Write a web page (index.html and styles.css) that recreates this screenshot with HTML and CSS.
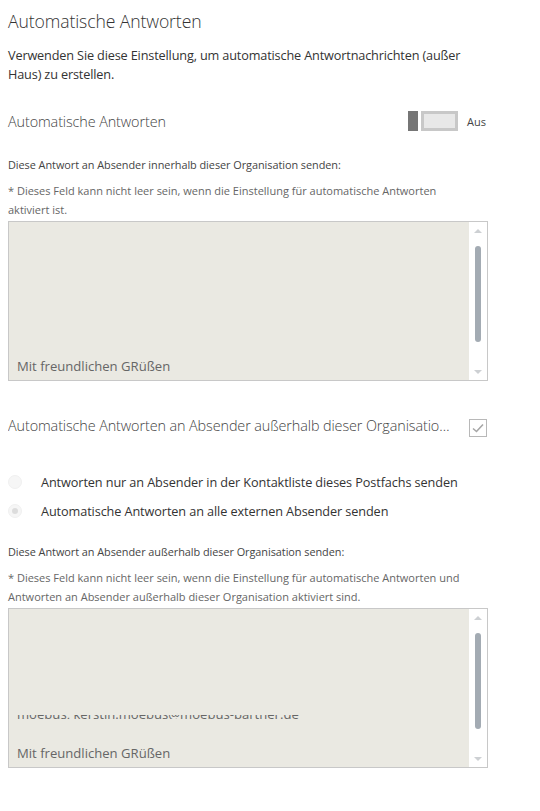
FILE: index.html
```html
<!DOCTYPE html>
<html lang="de">
<head>
<meta charset="utf-8">
<link rel="stylesheet" href="styles.css">
</head>
<body>
<div class="page">
  <h1 class="title">Automatische Antworten</h1>
  <p class="desc">Verwenden Sie diese Einstellung, um automatische Antwortnachrichten (außer Haus) zu erstellen.</p>

  <div class="row toggle-row">
    <span class="label">Automatische Antworten</span>
    <div class="toggle-wrap">
      <span class="toggle"><span class="knob"></span><span class="track"></span></span>
      <span class="toggle-text">Aus</span>
    </div>
  </div>

  <p class="small first-small">Diese Antwort an Absender innerhalb dieser Organisation senden:</p>
  <p class="note">* Dieses Feld kann nicht leer sein, wenn die Einstellung für automatische Antworten aktiviert ist.</p>

  <div class="editor">
    <div class="editor-body">
      <div class="editor-text">Mit freundlichen GRüßen</div>
    </div>
    <div class="scrollbar">
      <span class="arrow up"></span>
      <span class="thumb"></span>
      <span class="arrow down"></span>
    </div>
  </div>

  <div class="row check-row">
    <span class="label ellipsis">Automatische Antworten an Absender außerhalb dieser Organisation senden</span>
    <span class="checkbox">
      <svg width="14" height="12" viewBox="0 0 14 12"><path d="M2 6.5 L5.5 9.5 L12 2.5" fill="none" stroke="#a6a6a6" stroke-width="1.6"/></svg>
    </span>
  </div>

  <div class="radios">
    <div class="radio-row"><span class="radio"></span><span class="radio-text">Antworten nur an Absender in der Kontaktliste dieses Postfachs senden</span></div>
    <div class="radio-row"><span class="radio checked"></span><span class="radio-text">Automatische Antworten an alle externen Absender senden</span></div>
  </div>

  <p class="small second-small">Diese Antwort an Absender außerhalb dieser Organisation senden:</p>
  <p class="note">* Dieses Feld kann nicht leer sein, wenn die Einstellung für automatische Antworten und Antworten an Absender außerhalb dieser Organisation aktiviert sind.</p>

  <div class="editor">
    <div class="editor-body">
      <div class="cut-line"><span>moebus, kerstin.moebus@moebus-partner.de</span></div>
      <div class="editor-text">Mit freundlichen GRüßen</div>
    </div>
    <div class="scrollbar">
      <span class="arrow up"></span>
      <span class="thumb"></span>
      <span class="arrow down"></span>
    </div>
  </div>
</div>
</body>
</html>
```
FILE: styles.css
```css
* { box-sizing: border-box; }
html, body { margin: 0; padding: 0; background: #fff; }
body {
  font-family: "Open Sans", "Noto Sans", "Liberation Sans", sans-serif;
  color: #333;
}
.page {
  width: 540px;
  padding: 0 0 0 8px;
}
.title {
  margin: 0;
  padding-top: 8px;
  font-size: 17.6px;
  font-weight: 300;
  line-height: 26px;
  color: #333;
  letter-spacing: -0.1px;
}
.desc {
  margin: 12px 0 0;
  width: 470px;
  font-size: 12.7px;
  line-height: 19px;
  color: #333;
  letter-spacing: -0.15px;
}
.row {
  display: flex;
  align-items: center;
  width: 480px;
}
.toggle-row {
  margin-top: 26px;
  height: 22px;
  justify-content: space-between;
}
.label {
  font-size: 14.4px;
  font-weight: 300;
  color: #444;
  letter-spacing: -0.1px;
}
.toggle-wrap {
  display: flex;
  align-items: center;
  gap: 9px;
  width: 80px;
}
.toggle {
  display: flex;
  gap: 3px;
  height: 20px;
}
.knob {
  width: 10px;
  height: 20px;
  background: #767676;
}
.track {
  width: 37px;
  height: 20px;
  border: 3px solid #c8c8c8;
  background: #e8e8e8;
}
.toggle-text {
  font-size: 11px;
  color: #444;
}
.small {
  margin: 0;
  font-size: 10.9px;
  line-height: 19px;
  color: #444;
  letter-spacing: -0.05px;
}
.first-small { margin-top: 23px; }
.second-small { margin-top: 21px; }
.note {
  margin: 7px 0 0;
  width: 465px;
  font-size: 11px;
  line-height: 19px;
  color: #666;
  letter-spacing: 0;
}
.editor {
  margin-top: 2px;
  width: 480px;
  height: 160px;
  border: 1px solid #c8c8c8;
  display: flex;
}
.editor-body {
  flex: 1;
  background: #eae9e2;
  display: flex;
  flex-direction: column;
  justify-content: flex-end;
  padding: 0 0 5px 8px;
}
.editor-text {
  font-size: 13.1px;
  line-height: 18px;
  color: #666;
}
.cut-line {
  height: 4px;
  overflow: hidden;
  margin-bottom: 25px;
}
.cut-line span {
  display: block;
  margin-top: -10px;
  font-size: 13.1px;
  line-height: 18px;
  color: #666;
  white-space: nowrap;
}
.scrollbar {
  width: 18px;
  background: #fff;
  display: flex;
  flex-direction: column;
  align-items: center;
}
.arrow {
  width: 0; height: 0;
  border-left: 4px solid transparent;
  border-right: 4px solid transparent;
}
.arrow.up {
  margin-top: 7px;
  border-bottom: 4px solid #cdd0d3;
}
.arrow.down {
  margin-top: auto;
  margin-bottom: 6px;
  border-top: 4px solid #cdd0d3;
}
.thumb {
  width: 6px;
  background: #a3abb3;
  border-radius: 3px;
  margin-top: 13px;
  height: 96px;
}
.check-row {
  margin-top: 33px;
  height: 22px;
  justify-content: space-between;
  padding-right: 1px;
}
.ellipsis {
  max-width: 446px;
  white-space: nowrap;
  overflow: hidden;
  text-overflow: ellipsis;
}
.checkbox {
  width: 18px;
  height: 18px;
  border: 1px solid #b8b8b8;
  display: flex;
  align-items: center;
  justify-content: center;
  margin-top: 5px;
}
.radios {
  margin-top: 36px;
  display: flex;
  flex-direction: column;
  gap: 9px;
}
.radio-row {
  display: flex;
  align-items: center;
  height: 20px;
}
.radio {
  width: 14px;
  height: 14px;
  border-radius: 50%;
  background: #f6f6f6;
  border: 1px solid #f0f0f0;
  margin-right: 19px;
  position: relative;
}
.radio.checked::after {
  content: "";
  position: absolute;
  left: 3px; top: 3px;
  width: 6px; height: 6px;
  border-radius: 50%;
  background: #dcdcdc;
}
.radio-text {
  font-size: 12.7px;
  color: #333;
  letter-spacing: -0.1px;
}
```
